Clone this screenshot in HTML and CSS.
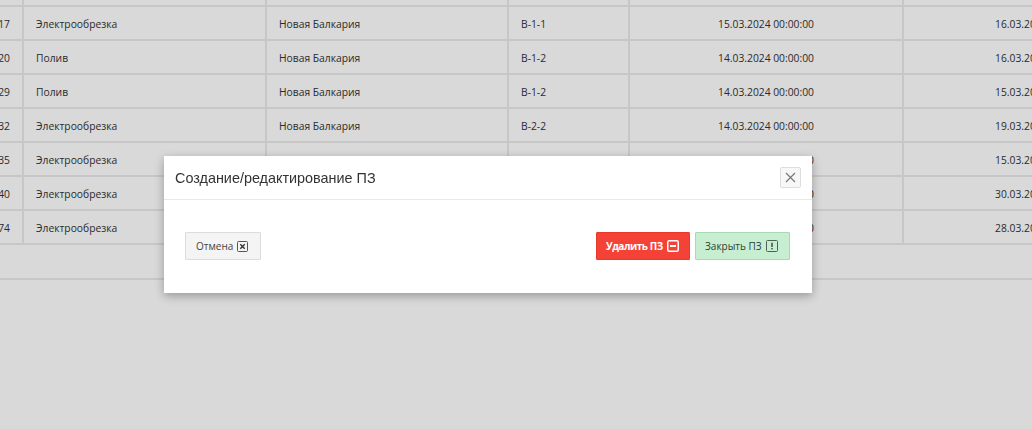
FILE: index.html
```html
<!DOCTYPE html>
<html lang="ru">
<head>
    <meta charset="UTF-8">
    <meta name="viewport" content="width=device-width, initial-scale=1.0">
    <title>Создание/редактирование ПЗ</title>
    <link rel="stylesheet" href="styles.css">
</head>
<body>
    <div class="grid-wrap">
        <table class="grid">
            <colgroup>
                <col class="c-id">
                <col class="c-work">
                <col class="c-place">
                <col class="c-block">
                <col class="c-start">
                <col class="c-end">
            </colgroup>
            <tbody>
                <tr>
                    <td class="num">1214</td>
                    <td>Электрообрезка</td>
                    <td>Новая Балкария</td>
                    <td>В-1-1</td>
                    <td class="center">15.03.2024 00:00:00</td>
                    <td class="center">16.03.2024 00:00:00</td>
                </tr>
                <tr>
                    <td class="num">1217</td>
                    <td>Электрообрезка</td>
                    <td>Новая Балкария</td>
                    <td>В-1-1</td>
                    <td class="center">15.03.2024 00:00:00</td>
                    <td class="center">16.03.2024 00:00:00</td>
                </tr>
                <tr>
                    <td class="num">1220</td>
                    <td>Полив</td>
                    <td>Новая Балкария</td>
                    <td>В-1-2</td>
                    <td class="center">14.03.2024 00:00:00</td>
                    <td class="center">16.03.2024 00:00:00</td>
                </tr>
                <tr>
                    <td class="num">1229</td>
                    <td>Полив</td>
                    <td>Новая Балкария</td>
                    <td>В-1-2</td>
                    <td class="center">14.03.2024 00:00:00</td>
                    <td class="center">15.03.2024 00:00:00</td>
                </tr>
                <tr>
                    <td class="num">1232</td>
                    <td>Электрообрезка</td>
                    <td>Новая Балкария</td>
                    <td>В-2-2</td>
                    <td class="center">14.03.2024 00:00:00</td>
                    <td class="center">19.03.2024 00:00:00</td>
                </tr>
                <tr>
                    <td class="num">1235</td>
                    <td>Электрообрезка</td>
                    <td>Новая Балкария</td>
                    <td>В-2-1</td>
                    <td class="center">14.03.2024 00:00:00</td>
                    <td class="center">15.03.2024 00:00:00</td>
                </tr>
                <tr>
                    <td class="num">1240</td>
                    <td>Электрообрезка</td>
                    <td>Новая Балкария</td>
                    <td>В-3-1</td>
                    <td class="center">20.03.2024 00:00:00</td>
                    <td class="center">30.03.2024 00:00:00</td>
                </tr>
                <tr>
                    <td class="num">1274</td>
                    <td>Электрообрезка</td>
                    <td>Новая Балкария</td>
                    <td>В-3-2</td>
                    <td class="center">18.03.2024 00:00:00</td>
                    <td class="center">28.03.2024 00:00:00</td>
                </tr>
            </tbody>
            <tfoot>
                <tr>
                    <td colspan="6"></td>
                </tr>
            </tfoot>
        </table>
    </div>

    <div class="overlay"></div>

    <div class="modal">
        <div class="modal-header">
            <div class="modal-title">Создание/редактирование ПЗ</div>
            <button class="modal-close" type="button">
                <svg width="11" height="11" viewBox="0 0 11 11">
                    <path d="M1 1 L10 10 M10 1 L1 10" stroke="#777" stroke-width="1.2" fill="none"/>
                </svg>
            </button>
        </div>
        <div class="modal-body">
            <button class="btn btn-cancel" type="button">
                Отмена
                <svg class="ico" width="11" height="11" viewBox="0 0 11 11">
                    <rect x="0.5" y="0.5" width="10" height="10" rx="1" fill="none" stroke="#555"/>
                    <path d="M3.3 3.3 L7.7 7.7 M7.7 3.3 L3.3 7.7" stroke="#333" stroke-width="1.4"/>
                </svg>
            </button>
            <div class="actions">
                <button class="btn btn-delete" type="button">
                    Удалить ПЗ
                    <svg class="ico" width="12" height="12" viewBox="0 0 12 12">
                        <rect x="0.75" y="0.75" width="10.5" height="10.5" rx="1.5" fill="none" stroke="#fff" stroke-width="1.5"/>
                        <rect x="3" y="5" width="6" height="2" fill="#fff"/>
                    </svg>
                </button>
                <button class="btn btn-finish" type="button">
                    Закрыть ПЗ
                    <svg class="ico" width="12" height="12" viewBox="0 0 12 12">
                        <rect x="0.5" y="0.5" width="11" height="11" rx="1" fill="none" stroke="#4a6350"/>
                        <rect x="5.3" y="2.7" width="1.4" height="4.3" fill="#33473a"/>
                        <rect x="5.3" y="8" width="1.4" height="1.4" fill="#33473a"/>
                    </svg>
                </button>
            </div>
        </div>
    </div>
</body>
</html>
```

FILE: styles.css
```css
* {
    margin: 0;
    padding: 0;
    box-sizing: border-box;
}

body {
    background: #fff;
    font-family: 'Open Sans', 'Liberation Sans', sans-serif;
    color: #333;
    height: 100vh;
    overflow: hidden;
    position: relative;
}

.grid-wrap {
    width: 100%;
    overflow: hidden;
    margin-top: -28px;
}

.grid {
    table-layout: fixed;
    border-collapse: collapse;
    width: 1213px;
    margin-left: -30px;
    font-size: 10.3px;
}

.c-id { width: 53px; }
.c-work { width: 243px; }
.c-place { width: 242px; }
.c-block { width: 121px; }
.c-start { width: 274px; }
.c-end { width: 280px; }

.grid td {
    height: 34px;
    padding: 2px 12px 0;
    border-right: 2px solid #eaeaea;
    border-bottom: 2px solid #eaeaea;
    white-space: nowrap;
    overflow: hidden;
    vertical-align: middle;
}

.grid td.num {
    text-align: right;
    padding-right: 12px;
}

.grid td.center {
    text-align: center;
}

.grid tfoot td {
    border-right: none;
    height: 35px;
}

.overlay {
    position: fixed;
    inset: 0;
    background: rgba(0, 0, 0, 0.15);
}

.modal {
    position: absolute;
    left: 164px;
    top: 156px;
    width: 648px;
    background: #fff;
    box-shadow: 0 3px 9px rgba(0, 0, 0, 0.3);
    z-index: 10;
}

.modal-header {
    height: 44px;
    display: flex;
    align-items: center;
    justify-content: space-between;
    padding: 0 11px;
    border-bottom: 1px solid #e8e8e8;
}

.modal-title {
    font-family: 'Liberation Sans', Arial, sans-serif;
    font-size: 14.4px;
    color: #333;
}

.modal-close {
    width: 21px;
    height: 21px;
    border: 1px solid #ddd;
    border-radius: 2px;
    background: #f7f7f7;
    display: flex;
    align-items: center;
    justify-content: center;
}

.modal-body {
    display: flex;
    justify-content: space-between;
    align-items: center;
    padding: 32px 22px 33px 21px;
}

.actions {
    display: flex;
    gap: 5px;
}

.btn {
    height: 28px;
    display: flex;
    align-items: center;
    gap: 4px;
    font-family: 'Open Sans', sans-serif;
    font-size: 10px;
    border: 1px solid transparent;
    border-radius: 1px;
}

.btn-cancel {
    width: 76px;
    padding: 0 0 0 10px;
    background: #f4f4f4;
    border-color: #dcdcdc;
    color: #444;
}

.btn-delete {
    width: 94px;
    padding-left: 9px;
    background: #f44336;
    border-color: #e8392d;
    color: #fff;
    font-weight: 700;
    letter-spacing: -0.45px;
}

.btn-finish {
    width: 95px;
    padding-left: 9px;
    background: #c8eed1;
    border-color: #a9d9b4;
    color: #2f3d33;
}
```
